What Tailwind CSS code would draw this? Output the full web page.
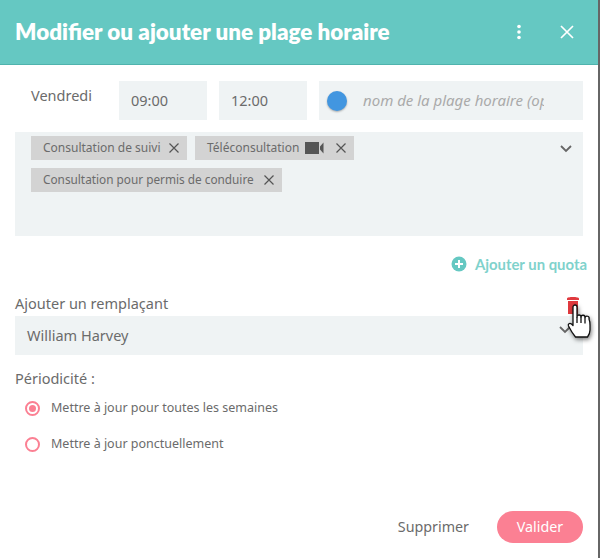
<!DOCTYPE html>
<html lang="fr">
<head>
  <meta charset="UTF-8" />
  <title>Modifier une plage horaire</title>
  <script src="https://cdn.jsdelivr.net/npm/@tailwindcss/browser@4"></script>
</head>
<body class="bg-white">
  <div class="relative h-[558px] w-[600px] overflow-hidden border-r-2 border-r-[#666] bg-white font-['Noto_Sans',sans-serif] text-[#6b6b6b]">
    <!-- Header -->
    <header class="flex h-[65px] items-center border-b border-[#4fb3ad] bg-[#65c8c2] pl-[15px] pr-[23px] text-white">
      <h1 class="flex-1 font-['Lato',sans-serif] text-[22.4px] font-extrabold">Modifier ou ajouter une plage horaire</h1>
      <svg class="mr-[37px]" width="6" height="16" viewBox="0 0 6 16" fill="#fff"><circle cx="3" cy="2.5" r="1.8"/><circle cx="3" cy="8" r="1.8"/><circle cx="3" cy="13.5" r="1.8"/></svg>
      <svg width="16" height="16" viewBox="0 0 16 16" stroke="#fff" stroke-width="1.7"><path d="M2 2l12 12M14 2L2 14"/></svg>
    </header>

    <main class="px-[15px]">
      <!-- Time row -->
      <div class="mt-4 flex h-[39px] gap-3 text-[14.5px]">
        <span class="w-[92px] pl-4 pt-1">Vendredi</span>
        <div class="flex w-[88px] items-center bg-[#eff3f4] pl-3">09:00</div>
        <div class="flex w-[88px] items-center bg-[#eff3f4] pl-3">12:00</div>
        <div class="flex w-[264px] items-center bg-[#eff3f4] pl-2">
          <span class="h-5 w-5 shrink-0 rounded-full bg-[#4296e0] shadow-[0_1px_2px_rgba(0,0,0,0.3)]"></span>
          <span class="ml-4 w-[181px] overflow-hidden text-[15px] italic whitespace-nowrap text-[#aaa]">nom de la plage horaire (optionnel)</span>
        </div>
      </div>

      <!-- Motifs -->
      <div class="relative mt-3 flex h-[104px] flex-col gap-2 bg-[#eff3f4] px-4 pt-1 text-[12px]">
        <div class="flex gap-2">
          <span class="flex h-6 w-[156px] items-center bg-[#d3d3d3] pl-3">Consultation de suivi
            <svg class="ml-auto mr-2" width="10" height="10" viewBox="0 0 10 10" stroke="#555" stroke-width="1.2"><path d="M0.5 0.5l9 9M9.5 0.5l-9 9"/></svg>
          </span>
          <span class="flex h-6 w-[159px] items-center bg-[#d3d3d3] pl-3">Téléconsultation
            <svg class="ml-1.5" width="19" height="12" viewBox="0 0 19 12" fill="#555"><path d="M0 0h14v12H0zM15 4.500L18.500 0.500v11L15 7.500z"/></svg>
            <svg class="ml-auto mr-2" width="10" height="10" viewBox="0 0 10 10" stroke="#555" stroke-width="1.2"><path d="M0.5 0.5l9 9M9.5 0.5l-9 9"/></svg>
          </span>
        </div>
        <span class="flex h-6 w-[251px] items-center bg-[#d3d3d3] pl-3 text-[11.8px]">Consultation pour permis de conduire
          <svg class="ml-auto mr-2" width="10" height="10" viewBox="0 0 10 10" stroke="#555" stroke-width="1.2"><path d="M0.5 0.5l9 9M9.5 0.5l-9 9"/></svg>
        </span>
        <svg class="absolute right-[11px] top-[13px]" width="12" height="8" viewBox="0 0 12 8" fill="none" stroke="#666" stroke-width="1.8"><path d="M1 1l5 5 5-5"/></svg>
      </div>

      <!-- Quota -->
      <div class="mt-[17px] flex items-center justify-end gap-2 font-['Lato',sans-serif] text-[14.9px] font-bold text-[#7fd2cc]">
        <svg width="16" height="16" viewBox="0 0 16 16"><circle cx="8" cy="8" r="7.500" fill="#65c8c2"/><path d="M8 4v8M4 8h8" stroke="#fff" stroke-width="2"/></svg>
        <span class="-mr-[4px]">Ajouter un quota</span>
      </div>

      <!-- Remplacant -->
      <div class="mt-[17px] text-[14.5px] leading-[22px]">Ajouter un remplaçant</div>
      <div class="mt-[2px] flex h-[39px] items-center bg-[#eff3f4] pl-3 text-[14.5px]">William Harvey</div>

      <div class="mt-[12px] text-[14.5px] leading-[22px]">Périodicité :</div>
      <div class="mt-[10px] ml-[10px] flex flex-col gap-[18px] text-[12.5px]">
        <label class="flex h-[18px] items-center gap-[11px]">
          <span class="flex h-[15px] w-[15px] items-center justify-center rounded-full border-2 border-[#fb8093]"><span class="h-[7px] w-[7px] rounded-full bg-[#fb8093]"></span></span>
          Mettre à jour pour toutes les semaines
        </label>
        <label class="flex h-[18px] items-center gap-[11px]">
          <span class="h-[15px] w-[15px] rounded-full border-2 border-[#fb8093]"></span>
          Mettre à jour ponctuellement
        </label>
      </div>
    </main>

    <!-- Footer -->
    <footer class="absolute bottom-[15px] right-[15px] flex items-center gap-7 text-[14.3px]">
      <span>Supprimer</span>
      <span class="flex h-8 w-[86px] items-center justify-center rounded-full bg-[#fb8093] text-white">Valider</span>
    </footer>

    <!-- Trash and hand cursor over the select -->
    <svg class="absolute left-[559px] top-[326px]" width="12" height="8" viewBox="0 0 12 8" fill="none" stroke="#666" stroke-width="1.8"><path d="M1 1l5 5 5-5"/></svg>
    <svg class="absolute left-[566px] top-[296px]" width="14" height="18" viewBox="0 0 14 18" fill="#e0393e"><path d="M1 2.500C1 1.500 4 1 7 1s6 .5 6 1.500V4H1zM2 5h10v13H2z"/></svg>
    <svg class="absolute left-[567px] top-[304px] drop-shadow-[1px_2px_2px_rgba(0,0,0,0.5)]" width="24" height="35" viewBox="0 0 24 35" fill="#fff" stroke="#111" stroke-width="1.300" stroke-linejoin="round"><path d="M6 3a2 2 0 0 1 4 0v10a2 2 0 0 1 4 0 2 2 0 0 1 4 .5 2 2 0 0 1 4 1.500c.8 2 1 4 1 6v5c0 3-1 5-2.500 7H8.500C6 30 3 25 1.500 22c-.8-2 1-3.500 3-2l1.500 1.500z"/><path d="M10 13v6M14 13v6M18 13.500v6" fill="none"/></svg>
  </div>
</body>
</html>
